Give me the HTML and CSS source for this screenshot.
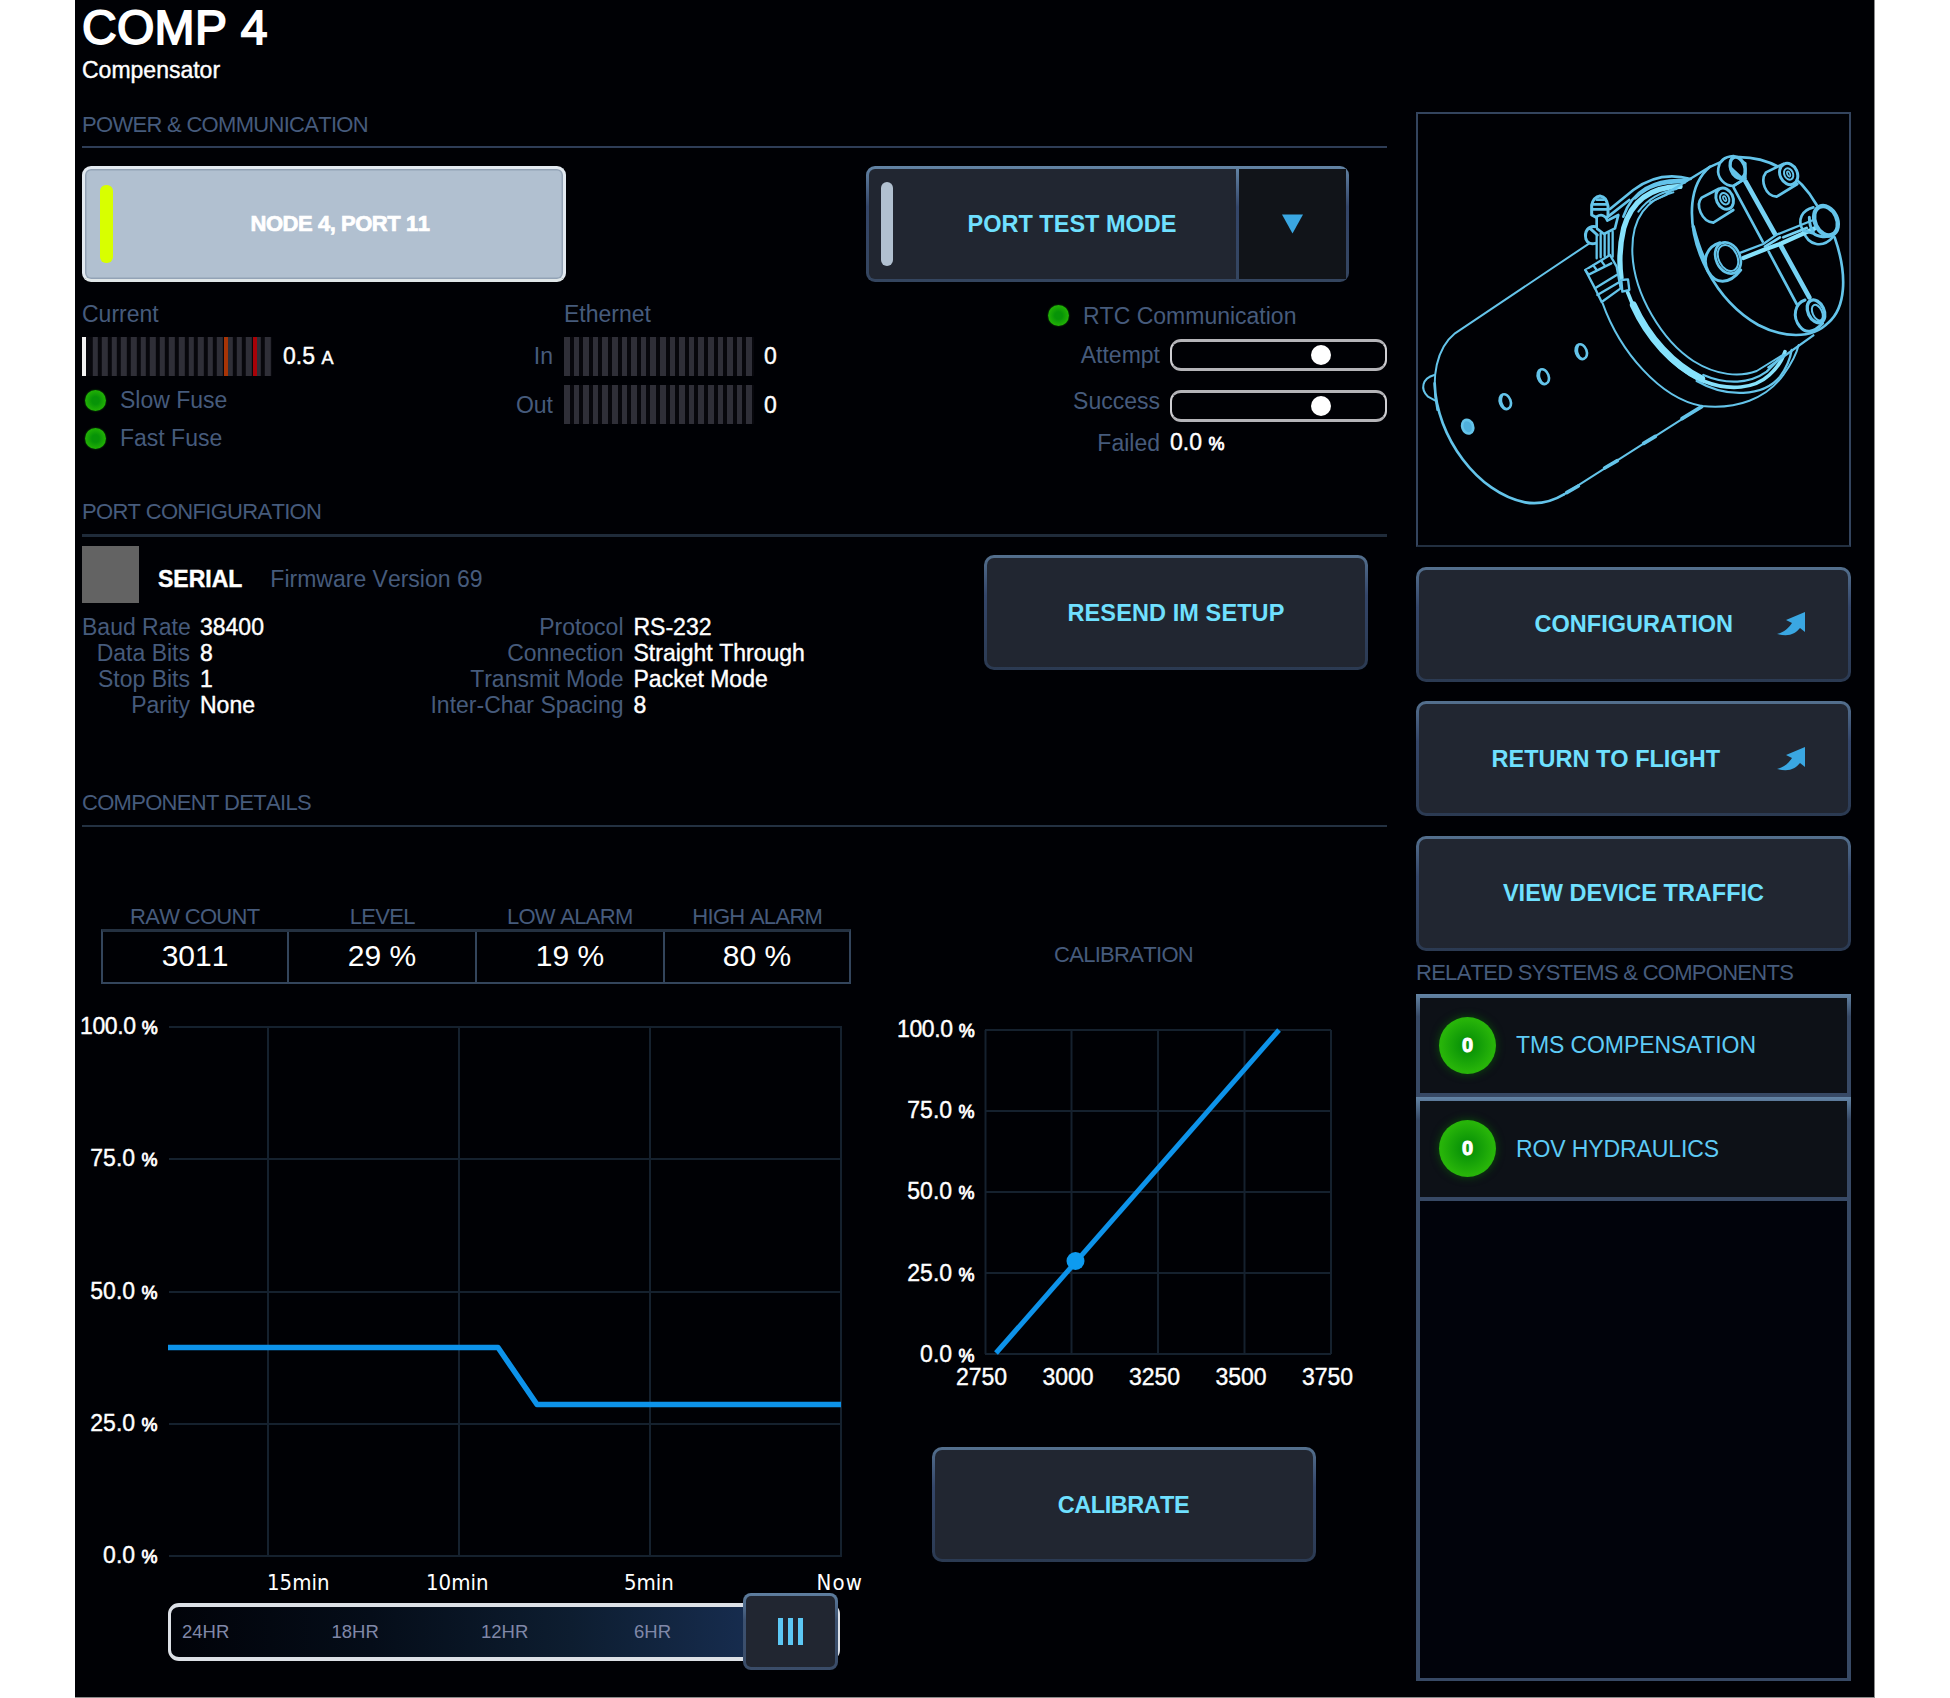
FILE: index.html
```html
<!DOCTYPE html>
<html lang="en">
<head>
<meta charset="utf-8">
<title>COMP 4</title>
<link rel="stylesheet" href="styles.css">
</head>
<body>
<div class="panel">
  <main class="main">
    <header class="head">
      <h1 class="title">COMP 4</h1>
      <p class="subtitle">Compensator</p>
    </header>

    <section class="section power">
      <h2 class="section-title bright">POWER &amp; COMMUNICATION</h2>
      <div class="power-buttons">
        <button class="port-btn"><i class="status on"></i><span>NODE 4, PORT 11</span></button>
        <div class="split-btn">
          <button class="split-main"><i class="status"></i><span>PORT TEST MODE</span></button>
          <button class="split-drop"><svg width="21" height="20" viewBox="0 0 22 20"><path d="M0 0H22L11 20Z" fill="#3aa7e2"/></svg></button>
        </div>
      </div>
      <div class="metrics">
        <div class="current">
          <div class="label">Current</div>
          <div class="gauge-row"><div class="gauge live"><i class="mark warn"></i><i class="mark crit"></i></div><span class="value">0.5 <small class="unit-a">A</small></span></div>
          <div class="led-row"><i class="led"></i><span class="label">Slow Fuse</span></div>
          <div class="led-row second"><i class="led"></i><span class="label">Fast Fuse</span></div>
        </div>
        <div class="ethernet">
          <span></span><span class="label">Ethernet</span><span></span>
          <span class="label right">In</span><div class="gauge"></div><span class="value">0</span>
          <span class="label right">Out</span><div class="gauge"></div><span class="value">0</span>
        </div>
        <div class="rtc">
          <div class="led-row rtc-title"><i class="led"></i><span class="label">RTC Communication</span></div>
          <div class="rtc-row"><span class="label">Attempt</span><div class="track"><i class="knob"></i></div></div>
          <div class="rtc-row success"><span class="label">Success</span><div class="track"><i class="knob"></i></div></div>
          <div class="rtc-row failed"><span class="label">Failed</span><span class="value">0.0 <small>%</small></span></div>
        </div>
      </div>
    </section>

    <section class="section port">
      <h2 class="section-title thick">PORT CONFIGURATION</h2>
      <div class="port-body">
        <div>
          <div class="serial"><i class="swatch"></i><b>SERIAL</b><span class="label">Firmware Version 69</span></div>
          <div class="props">
            <span class="label">Baud Rate</span><span class="value">38400</span><span class="label">Protocol</span><span class="value">RS-232</span>
            <span class="label">Data Bits</span><span class="value">8</span><span class="label">Connection</span><span class="value">Straight Through</span>
            <span class="label">Stop Bits</span><span class="value">1</span><span class="label">Transmit Mode</span><span class="value">Packet Mode</span>
            <span class="label">Parity</span><span class="value">None</span><span class="label">Inter-Char Spacing</span><span class="value">8</span>
          </div>
        </div>
        <button class="btn resend">RESEND IM SETUP</button>
      </div>
    </section>

    <section class="section details">
      <h2 class="section-title">COMPONENT DETAILS</h2>
      <div class="details-body">
        <div class="trend">
          <div class="stats">
            <span>RAW COUNT</span><span>LEVEL</span><span>LOW ALARM</span><span>HIGH ALARM</span>
          </div>
          <div class="stats-values">
            <span>3011</span><span>29 %</span><span>19 %</span><span>80 %</span>
          </div>
          <svg class="trend-chart" width="795" height="619" viewBox="75 984 795 619">
            <g stroke="#15212e" stroke-width="2">
              <path d="M169 1027H842M169 1159H842M169 1292H842M169 1424H842M169 1556H842M268 1027V1556M459 1027V1556M650 1027V1556M841 1027V1556"/>
            </g>
            <path d="M168 1347.500H498L537 1404.500H841" fill="none" stroke="#0d93ea" stroke-width="5.500" stroke-linejoin="round"/>
            <g class="axis" text-anchor="end">
              <text x="157.500" y="1033.500" class="full">100.0 <tspan class="pct">%</tspan></text>
              <text x="157.500" y="1166">75.0 <tspan class="pct">%</tspan></text>
              <text x="157.500" y="1298.500">50.0 <tspan class="pct">%</tspan></text>
              <text x="157.500" y="1431">25.0 <tspan class="pct">%</tspan></text>
              <text x="157.500" y="1563">0.0 <tspan class="pct">%</tspan></text>
            </g>
            <g class="time">
              <text x="267" y="1590">15min</text>
              <text x="426" y="1590">10min</text>
              <text x="624" y="1590">5min</text>
              <text x="816.500" y="1590" class="now">Now</text>
            </g>
          </svg>
          <div class="range">
            <span>24HR</span><span>18HR</span><span>12HR</span><span>6HR</span>
            <div class="handle"><i></i><i></i><i></i></div>
          </div>
        </div>
        <div class="calibration">
          <h3 class="cal-title">CALIBRATION</h3>
          <svg class="cal-chart" width="511" height="400" viewBox="868 1007 511 400">
            <g stroke="#15212e" stroke-width="2">
              <path d="M985 1030H1331M985 1111H1331M985 1192H1331M985 1273H1331M985 1354H1331M985.500 1030V1354M1071.500 1030V1354M1158 1030V1354M1244.500 1030V1354M1331 1030V1354"/>
            </g>
            <path d="M996 1353L1279 1030" stroke="#0d93ea" stroke-width="5"/>
            <circle cx="1075.500" cy="1261" r="9" fill="#0d9bf0"/>
            <g class="axis" text-anchor="end">
              <text x="974.500" y="1037" class="full">100.0 <tspan class="pct">%</tspan></text>
              <text x="974.500" y="1118">75.0 <tspan class="pct">%</tspan></text>
              <text x="974.500" y="1198.500">50.0 <tspan class="pct">%</tspan></text>
              <text x="974.500" y="1281">25.0 <tspan class="pct">%</tspan></text>
              <text x="974.500" y="1361.500">0.0 <tspan class="pct">%</tspan></text>
            </g>
            <g class="axis" text-anchor="middle">
              <text x="981.500" y="1385">2750</text>
              <text x="1068" y="1385">3000</text>
              <text x="1154.500" y="1385">3250</text>
              <text x="1241" y="1385">3500</text>
              <text x="1327.500" y="1385">3750</text>
            </g>
          </svg>
          <button class="btn calibrate">CALIBRATE</button>
        </div>
      </div>
    </section>
  </main>

  <aside class="side">
    <div class="figure">
      <svg width="432" height="431" viewBox="54 42 1296 1293" fill="none" stroke="#64c4ea" stroke-width="7" stroke-linejoin="round" stroke-linecap="round">
        <!-- housing -->
        <path d="M568 430L165 700C110 745 92 830 112 930" stroke-width="6"/>
        <path d="M104 850C108 1010 235 1180 375 1207C420 1215 455 1205 492 1183" stroke-width="8"/>
        <path d="M492 1183L905 920" stroke-width="6"/>
        <path d="M500 1178L535 1158M614 1104L652 1082M731 1030L766 1009M846 956L905 920" stroke-width="11"/>
        <path d="M103 825C66 835 60 868 84 890L106 902" stroke-width="6"/>
        <g stroke-width="8">
          <ellipse cx="544" cy="755" rx="16" ry="23" transform="rotate(-20 544 755)"/>
          <ellipse cx="430" cy="830" rx="16" ry="23" transform="rotate(-20 430 830)"/>
          <ellipse cx="316" cy="905" rx="16" ry="23" transform="rotate(-20 316 905)"/>
          <ellipse cx="203" cy="980" rx="16" ry="21" transform="rotate(-20 203 980)" fill="#4fb0dc"/>
          <path d="M533 738C527 752 533 768 543 776M419 813C413 827 419 843 429 851M305 888C299 902 305 918 315 926"/>
        </g>
        <!-- clamp ring -->
        <g transform="translate(510 135)">
          <path d="M98 475C150 620 270 760 395 783C500 795 590 760 640 690C665 655 680 625 686 600" stroke-width="6"/>
          <path d="M120 192L190 135C240 97 300 85 362 102M118 212L178 165" stroke-width="8"/>
          <path d="M160 215C185 140 250 98 350 106M195 160C235 122 280 110 345 112" stroke-width="8"/>
          <path d="M330 124C245 126 185 165 161 250C149 300 147 350 153 398" stroke="#86e2fc" stroke-width="16"/>
          <path d="M205 200C235 160 270 142 320 132" stroke-width="6"/>
          <path d="M173 442C215 560 300 665 400 708C480 740 555 730 598 690C622 668 638 642 645 620" stroke="#86e2fc" stroke-width="11"/>
          <path d="M190 480C235 580 310 660 395 702" stroke="#86e2fc" stroke-width="21"/>
          <path d="M380 708C470 760 580 755 630 695C650 668 660 645 665 615" stroke-width="7"/>
          <path d="M310 142C220 165 185 230 187 320C190 450 280 590 370 648C440 692 510 697 560 678L635 632" stroke-width="6"/>
          <path d="M400 690C470 720 540 716 590 680L640 630" stroke-width="7"/>
          <path d="M240 172L290 150" stroke-width="5"/>
        </g>
        <!-- cap -->
        <path d="M800 280L925 203L985 176M1105 802L1240 706" stroke-width="7"/>
        <path d="M1000 172C1110 165 1200 225 1250 315M1304 412C1345 530 1335 625 1285 668C1235 720 1145 712 1075 675C945 600 865 440 877 310C882 260 900 225 930 200" stroke-width="8"/>
        <path d="M880 380C890 420 900 455 920 490" stroke-width="10"/>
        <!-- clamp bolt -->
        <g fill="#000105">
          <path d="M575 345V315C580 295 588 290 600 288C615 290 620 300 624 318V350L600 358Z" stroke-width="9"/>
          <path d="M578 313H620M578 328H622M590 299H612" stroke-width="8"/>
          <path d="M590 350C605 340 618 348 622 362L655 345L645 385L612 402L590 385Z" stroke-width="8"/>
          <path d="M588 380C565 375 552 395 558 418C562 430 575 433 586 430M570 385L592 405" stroke-width="9"/>
          <path d="M590 405V475M602 400V472M614 402V468M626 400V465M638 395V470" stroke-width="7"/>
          <path d="M556 510L630 465L650 500L662 565L605 606L585 565Z"/>
          <path d="M556 510L566 524L634 490M585 565L650 525M592 585L660 545M580 496L590 510M605 484L616 499" stroke-width="7"/>
          <path d="M664 540L684 538L688 570L667 575Z" stroke-width="7"/>
        </g>
        <!-- bosses -->
        <g fill="#000105">
          <path d="M955 205C950 235 975 258 1000 258L1036 235V190L1000 168C970 170 958 185 955 205Z" stroke-width="8"/>
          <path d="M1150 192L1098 217C1080 240 1095 288 1130 290L1192 252" stroke-width="8"/>
          <ellipse cx="1166" cy="222" rx="26" ry="33" transform="rotate(-25 1166 222)" stroke-width="9"/>
          <ellipse cx="1166" cy="222" rx="13" ry="18" transform="rotate(-25 1166 222)" stroke-width="6"/>
          <ellipse cx="1166" cy="222" rx="4" ry="8" transform="rotate(-25 1166 222)" stroke-width="5"/>
          <path d="M955 267L905 293C885 315 905 365 940 368L1000 330" stroke-width="8"/>
          <ellipse cx="974" cy="296" rx="25" ry="33" transform="rotate(-25 974 296)" stroke-width="9"/>
          <ellipse cx="974" cy="296" rx="13" ry="18" transform="rotate(-25 974 296)" stroke-width="6"/>
          <ellipse cx="974" cy="296" rx="4" ry="8" transform="rotate(-25 974 296)" stroke-width="5"/>
          <path d="M1240 322C1205 330 1192 360 1208 390C1225 440 1270 445 1300 410" stroke-width="8"/>
          <path d="M960 428C920 440 905 480 925 515C945 550 985 558 1022 510" stroke-width="9"/>
          <path d="M1215 600C1185 610 1175 650 1200 680C1215 700 1240 700 1268 670" stroke-width="9"/>
        </g>
        <!-- cross brace -->
        <path d="M1001 263L1088 425M1106 455L1190 612" stroke-width="8"/>
        <path d="M1037 245L1125 402M1143 438L1228 592" stroke="#76d2f4" stroke-width="14"/>
        <path d="M1000 258L1036 236" stroke-width="8"/>
        <ellipse cx="1013" cy="203" rx="21" ry="33" transform="rotate(-20 1013 203)" stroke-width="10" fill="#000105"/>
        <path d="M992 205L1030 240" stroke-width="10"/>
        <path d="M1022 458L1090 432L1130 404L1240 360" stroke-width="7"/>
        <path d="M1030 474L1100 446L1145 430L1245 385" stroke="#86e2fc" stroke-width="13"/>
        <path d="M1095 440L1140 412M1150 412L1220 384" stroke="#76d2f4" stroke-width="8"/>
        <g fill="#000105">
          <ellipse cx="1278" cy="362" rx="33" ry="46" transform="rotate(-25 1278 362)" stroke-width="13"/>
          <ellipse cx="984" cy="474" rx="36" ry="49" transform="rotate(-25 984 474)" stroke-width="8"/>
          <ellipse cx="984" cy="474" rx="28" ry="41" transform="rotate(-25 984 474)" stroke-width="6"/>
          <ellipse cx="1248" cy="634" rx="24" ry="36" transform="rotate(-25 1248 634)" stroke-width="10"/>
          <ellipse cx="1252" cy="638" rx="14" ry="25" transform="rotate(-25 1252 638)" stroke-width="6"/>
        </g>
        <path d="M1212 392L1240 400C1255 412 1280 414 1300 404" stroke-width="9"/>
        <path d="M1228 352C1228 370 1232 385 1240 396" stroke-width="9"/>
      </svg>
    </div>
    <button class="btn side-btn linked"><span>CONFIGURATION</span><svg class="arrow" width="28" height="24" viewBox="0 0 28 24"><path d="M28 0V20L23 16C18 22 12 25 0 22C7 20 11 17 15 11L9 8Z" fill="#3aa7e2"/></svg></button>
    <button class="btn side-btn linked flight"><span>RETURN TO FLIGHT</span><svg class="arrow" width="28" height="24" viewBox="0 0 28 24"><path d="M28 0V20L23 16C18 22 12 25 0 22C7 20 11 17 15 11L9 8Z" fill="#3aa7e2"/></svg></button>
    <button class="btn side-btn">VIEW DEVICE TRAFFIC</button>
    <h2 class="related-title">RELATED SYSTEMS &amp; COMPONENTS</h2>
    <div class="related">
      <div class="related-row"><b class="count">0</b><span>TMS COMPENSATION</span></div>
      <div class="related-row"><b class="count">0</b><span>ROV HYDRAULICS</span></div>
    </div>
  </aside>
</div>
</body>
</html>
```
FILE: styles.css
```css
* { box-sizing: border-box; }
html { background: #fff; }
body {
  margin: 0;
  padding-left: 75px;
  font-family: "Liberation Sans", Arial, sans-serif;
  font-size: 23px;
  line-height: 26px;
  font-kerning: none;
  color: #fff;
  overflow: hidden;
}
h1, h2, h3, p { margin: 0; font-weight: normal; }
button { font: inherit; font-kerning: none; color: inherit; padding: 0; margin: 0; border: 0; }
i { display: block; flex: none; }

.panel {
  display: flex;
  width: 1800px;
  height: 1698px;
  padding-left: 7px;
  background: #000105;
  border-right: 1px solid #8b8b8b;
  border-bottom: 1px solid #8b8b8b;
}
.main { width: 1305px; flex: none; }
.side { width: 435px; margin-left: 29px; padding-top: 112px; flex: none; }

.head { height: 113px; }
.title { font-size: 48px; line-height: 56px; letter-spacing: .3px; -webkit-text-stroke: 1.8px #fff; }
.subtitle { margin-top: 2px; line-height: 24px; -webkit-text-stroke: .4px #fff; }

.section-title, .related-title, .cal-title, .stats {
  font-size: 22px;
  letter-spacing: -.7px;
  line-height: 24px;
  color: #465b7c;
}
.section-title { padding-bottom: 10px; border-bottom: 2px solid #233142; }
.section-title.bright { padding-bottom: 9px; border-color: #2e3d57; }
.section-title.thick { border-bottom-width: 3px; border-color: #1f2b3a; }
.label { color: #465b7c; white-space: nowrap; }
.label.right { text-align: right; }
.value { white-space: nowrap; -webkit-text-stroke: .4px #fff; }
.value small { font-size: 18px; -webkit-text-stroke: .8px #fff; }
.value small.unit-a { -webkit-text-stroke: .5px #fff; }

/* Power & communication */
.power { height: 387px; }
.power-buttons { display: flex; margin-top: 18px; gap: 300px; }
.port-btn {
  display: flex;
  align-items: center;
  width: 484px;
  height: 116px;
  padding-left: 15px;
  border: 3px solid #e3eaf1;
  border-bottom-color: #dfe6e8;
  border-radius: 9px;
  background: #b1c0d0;
  box-shadow: inset 0 0 0 1.5px #93a3b6;
  font-weight: bold;
  font-size: 22px;
  letter-spacing: -.45px;
}
.port-btn span { flex: 1; padding-left: 4px; text-align: center; -webkit-text-stroke: .7px #fff; }
.status { width: 12px; height: 84px; border-radius: 6px; background: #b1c0d0; }
.status.on { width: 13px; height: 78px; background: #d8ff00; }
.split-btn {
  display: flex;
  width: 483px;
  height: 116px;
  border: 3px solid transparent;
  border-radius: 9px;
  background: linear-gradient(#212631, #212631) padding-box, linear-gradient(#6384a5, #34466a 35%, #34455f) border-box;
}
.split-main { display: flex; align-items: center; width: 367px; padding-left: 12px; background: none; color: #6fe0ff; font-weight: bold; font-size: 23.500px; }
.split-main span { flex: 1; padding-right: 22px; padding-left: 37px; text-align: center; }
.split-drop {
  flex: 1;
  display: flex;
  align-items: center;
  justify-content: center;
  background: #111419;
  border: solid;
  border-image: linear-gradient(#6384a5, #34466a 35%, #34455f) 1;
  border-width: 0 0 0 3px;
}

.metrics { display: flex; margin-top: 18px; }
.current { width: 417px; padding-top: 1px; }
.gauge-row { display: flex; align-items: center; gap: 11px; margin-top: 10px; }
.gauge {
  position: relative;
  width: 190px;
  height: 39px;
  background: repeating-linear-gradient(90deg, #2f2f38 0 5.600px, #07070c 5.600px 9.600px);
}
.gauge.live { background: linear-gradient(#f2f2f2, #f2f2f2) 0 0 / 4px 39px no-repeat, linear-gradient(#07070c, #07070c) 0 0 / 10px 39px no-repeat, repeating-linear-gradient(90deg, #2f2f38 0 5.600px, #07070c 5.600px 9.600px) .8px 0; }
.mark { position: absolute; top: 0; width: 4px; height: 39px; }
.mark.warn { left: 142px; background: #a83406; }
.mark.crit { left: 171px; background: #a80208; }
.led-row { display: flex; align-items: center; gap: 14px; height: 32px; margin-top: 8px; padding-left: 3px; }
.led-row.second { margin-top: 6px; }
.led { width: 21px; height: 21px; border-radius: 50%; background: radial-gradient(#079407 25%, #1fae05 65%); box-shadow: 0 0 2px #0c6a08; }
.ethernet {
  display: grid;
  grid-template-columns: 54px 189px auto;
  grid-template-rows: 26px 39px 39px;
  column-gap: 11px;
  align-items: center;
  align-content: start;
  row-gap: 9.500px;
  padding-top: 1px;
}
.rtc { width: 340px; margin-left: auto; }
.led-row.rtc-title { margin: 0; padding-left: 1px; gap: 14px; height: 31px; }
.rtc-row { display: grid; grid-template-columns: 113px 217px; gap: 10px; height: 32px; margin-top: 8px; align-items: center; }
.rtc-row .label { text-align: right; }
.rtc-row:not(.failed) .label { padding-bottom: 1px; }
.rtc-row.success { margin-top: 17px; }
.rtc-row.success .label { padding-bottom: 9px; }
.rtc-row.failed { height: 26px; margin-top: 9px; }
.track {
  display: flex;
  align-items: center;
  height: 32px;
  padding-left: 139px;
  border: 3px solid #cfcfd3;
  border-width: 3px 2px;
  border-top-color: #b4b4b8;
  border-bottom-color: #b4b4b8;
  border-radius: 11px;
}
.knob { width: 20px; height: 20px; border-radius: 50%; background: #fff; }

/* Port configuration */
.port { height: 291px; }
.port-body { display: flex; justify-content: space-between; }
.serial { display: flex; align-items: center; height: 57px; margin-top: 9px; }
.serial b, .serial .label { padding-top: 8px; }
.serial b { margin-left: 19px; -webkit-text-stroke: .4px #fff; }
.serial .label { margin-left: 28px; }
.swatch { width: 57px; height: 57px; background: #636363; }
.props {
  display: grid;
  grid-template-columns: 108px 220px 193.500px auto;
  grid-auto-rows: 26.200px;
  column-gap: 10px;
  margin-top: 10.500px;
}
.props .label { text-align: right; }
.btn {
  display: block;
  height: 115px;
  border: 3px solid transparent;
  border-radius: 10px;
  background: linear-gradient(#212631, #212631) padding-box, linear-gradient(#54708e, #34466a 35%, #2b3a52) border-box;
  color: #6fe0ff;
  font-size: 23.500px;
  font-weight: bold;
}
.resend { width: 384px; margin: 18px 19px 0 0; letter-spacing: .1px; }

/* Component details */
.details-body { display: flex; }
.trend { width: 794px; padding-top: 78px; }
.stats, .stats-values { display: grid; width: 750px; margin-left: 19px; text-align: center; }
.stats { grid-template-columns: repeat(4, 1fr); }
.stats-values {
  grid-template-columns: 184px 188px 188px 186px;
  height: 55px;
  border: 2px solid #33455c;
  border-top: 3px solid #243141;
  font-size: 30px;
  line-height: 48px;
}
.stats-values span + span { border-left: 2px solid #33455c; }
.trend-chart { display: block; margin-left: -7px; }
.axis { font-size: 23px; fill: #fff; stroke: #fff; stroke-width: .4px; }
.full { letter-spacing: -.35px; }
.pct { font-size: 18px; stroke-width: .8px; }
.time { font-family: "DejaVu Sans Condensed", "DejaVu Sans", sans-serif; font-stretch: condensed; font-size: 22px; fill: #fff; }
.now { letter-spacing: 1.2px; }
.range {
  position: relative;
  display: grid;
  grid-template-columns: 149.500px 149.500px 153px auto;
  align-items: center;
  width: 672px;
  height: 58px;
  margin-left: 86px;
  padding-left: 11px;
  border: 3px solid #dce0e6;
  border-width: 4px 3px;
  border-radius: 11px;
  background: linear-gradient(90deg, #010309, #050d19 30%, #0d1d30 60%, #172d50 88%);
  font-size: 18.500px;
  color: #8088a8;
}
.handle {
  position: absolute;
  right: -1px;
  top: -14px;
  display: flex;
  align-items: center;
  justify-content: center;
  gap: 5px;
  width: 95px;
  height: 77px;
  border: 3px solid transparent;
  border-radius: 8px;
  background: linear-gradient(#212631, #212631) padding-box, linear-gradient(#5f7fa0, #3c5170 35%, #3a4c68) border-box;
}
.handle i { width: 5px; height: 27px; background: #5cc8f5; }
.calibration { display: flex; flex-direction: column; align-items: center; width: 511px; padding-top: 116px; margin-left: -8px; }
.cal-title { margin-bottom: 40px; }
.cal-chart { display: block; }
.calibrate { width: 384px; margin-top: 40px; letter-spacing: -.5px; }

/* Side column */
.figure { height: 435px; border: 2px solid #33445e; border-bottom-color: #222f40; }
.figure svg { display: block; }
.side-btn { width: 435px; margin-top: 19.500px; }
.linked { display: flex; align-items: center; justify-content: flex-end; padding-right: 43px; }
.linked span { margin-right: 44px; }
.flight span { margin-right: 57px; }
.related-title { margin: 10px 0 9px; letter-spacing: -.72px; }
.related { height: 687px; border: 4px solid #374965; border-top: 0; border-bottom-width: 3px; background: #01030b; }
.related-row {
  display: flex;
  align-items: center;
  gap: 20px;
  height: 103.500px;
  margin: 0 -4px;
  padding: 0 0 0 19px;
  border: 4px solid transparent;
  background: linear-gradient(#0d1117, #0d1117) padding-box, linear-gradient(#6384a5, #374965 22%) border-box;
  color: #5ecbf6;
  letter-spacing: -.1px;
}
.count {
  width: 57px;
  height: 57px;
  border-radius: 50%;
  background: radial-gradient(#0a9407 15%, #27b409 65%);
  box-shadow: 0 0 8px #0b4d0b;
  color: #fff;
  font-size: 20px;
  line-height: 56px;
  text-align: center;
  -webkit-text-stroke: 1px #fff;
}
```
